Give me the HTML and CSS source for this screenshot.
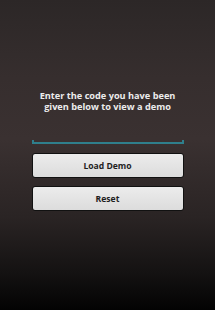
FILE: index.html
```html
<!DOCTYPE html>
<html lang="en">

<head>
  <meta charset="UTF-8">
  <meta name="viewport" content="width=device-width, initial-scale=1.0">
  <title>Demo</title>
  <link rel="stylesheet" href="styles.css">
</head>

<body>
  <div class="screen">
    <p class="intro">Enter the code you have been<br>given below to view a demo</p>
    <div class="code-field">
      <input class="code-input" type="text">
    </div>
    <button class="btn">Load Demo</button>
    <button class="btn">Reset</button>
  </div>
</body>

</html>
```

FILE: styles.css
```css
* {
  margin: 0;
  padding: 0;
  box-sizing: border-box;
}

html,
body {
  width: 100%;
  height: 100%;
}

body {
  background: linear-gradient(to bottom, #2c2727 0%, #362e2e 25%, #3a3131 45%, #2a2424 70%, #141212 88%, #030303 100%);
  font-family: "Open Sans", "Liberation Sans", sans-serif;
}

.screen {
  display: flex;
  flex-direction: column;
  align-items: center;
  padding-top: 90px;
}

.intro {
  color: #ececec;
  font-size: 9.2px;
  font-weight: bold;
  line-height: 11px;
  text-align: center;
}

.code-field {
  width: 152px;
  height: 4px;
  margin-top: 28px;
  border: 2px solid #2f7f8c;
  border-top: none;
}

.code-input {
  display: none;
}

.btn {
  width: 152px;
  height: 25px;
  margin-top: 9px;
  border: 1px solid #111;
  border-radius: 3px;
  background: linear-gradient(to bottom, #ececec, #dcdcdc);
  color: #1e1e1e;
  font-family: "Open Sans", "Liberation Sans", sans-serif;
  font-size: 8.6px;
  font-weight: bold;
}

.btn + .btn {
  margin-top: 8px;
}
```
